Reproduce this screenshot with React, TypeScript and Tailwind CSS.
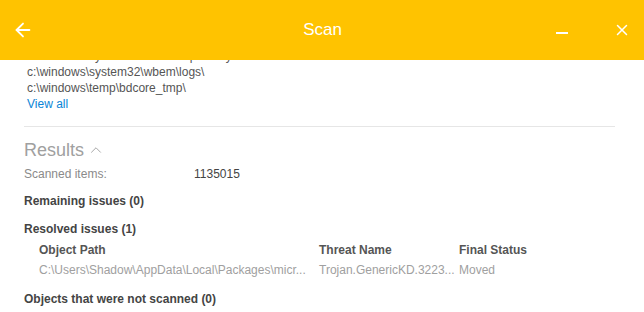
import { ArrowLeft, ChevronUp, X } from "lucide-react";

const excluded = [
  "c:\\windows\\system32\\wbem\\repository\\",
  "c:\\windows\\system32\\wbem\\logs\\",
  "c:\\windows\\temp\\bdcore_tmp\\",
];

export default function App() {
  return (
    <div
      className="w-[644px] h-[312px] overflow-hidden bg-white flex flex-col text-[12px]"
      style={{ fontFamily: '"Segoe UI", "Liberation Sans", Arial, sans-serif' }}
    >
      <header className="h-[60px] shrink-0 bg-[#ffc300] grid grid-cols-[1fr_auto_1fr] items-center pl-[12px] pr-[13px] text-white relative z-10">
        <ArrowLeft className="size-[22px]" strokeWidth={2} />
        <span className="text-[17px] pl-[2px]">Scan</span>
        <div className="flex items-center justify-end">
          <span className="block w-[12px] h-[2px] bg-white mt-[6px]" />
          <X className="size-[18px] ml-[45px]" strokeWidth={2} />
        </div>
      </header>

      <main className="flex-1 overflow-hidden px-6">
        <div className="-mt-[12px] pl-[3px] flex flex-col leading-[16px] text-[#555]">
          {excluded.map((p) => (
            <span key={p}>{p}</span>
          ))}
          <a className="text-[#0a84d6]">View all</a>
        </div>

        <div className="mt-[14px] border-t border-[#e6e6e6] mr-[5px]" />

        <div className="mt-[11px] flex items-center gap-[3px] text-[#a0a0a0]">
          <span className="text-[18px] leading-[24px]">Results</span>
          <ChevronUp className="size-[18px] mt-[-1px]" strokeWidth={1.25} />
        </div>

        <div className="mt-[4px] flex text-[#8a8a8a] leading-[16px]">
          <span className="w-[170px]">Scanned items:</span>
          <span className="text-[#444]">1135015</span>
        </div>

        <div className="mt-[11px] font-bold text-[#444] leading-[16px]">
          Remaining issues (0)
        </div>

        <div className="mt-[12px] font-bold text-[#444] leading-[16px]">
          Resolved issues (1)
        </div>

        <div className="mt-[3px] pl-[15px] grid grid-cols-[280px_140px_1fr] leading-[20px]">
          <span className="font-bold text-[#555]">Object Path</span>
          <span className="font-bold text-[#555]">Threat Name</span>
          <span className="font-bold text-[#555]">Final Status</span>
          <span className="text-[#a0a0a0]">C:\Users\Shadow\AppData\Local\Packages\micr...</span>
          <span className="text-[#a0a0a0]">Trojan.GenericKD.3223...</span>
          <span className="text-[#a0a0a0]">Moved</span>
        </div>

        <div className="mt-[11px] font-bold text-[#444] leading-[16px]">
          Objects that were not scanned (0)
        </div>
      </main>
    </div>
  );
}
